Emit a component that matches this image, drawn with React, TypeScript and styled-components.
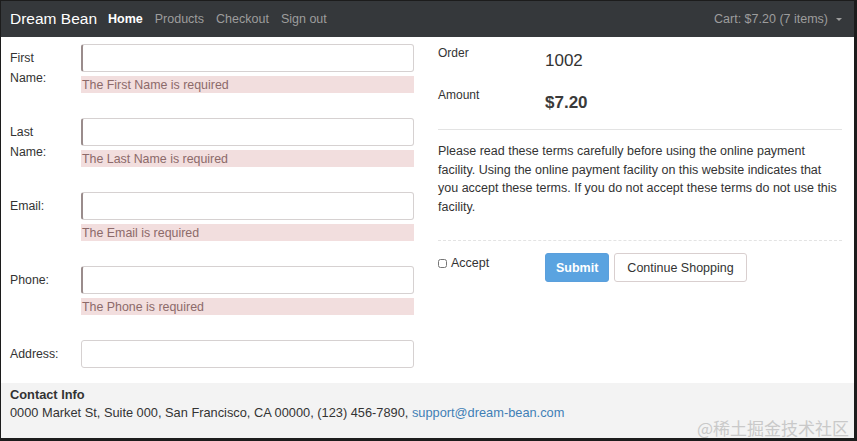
import styled, { createGlobalStyle } from 'styled-components';

const GlobalStyle = createGlobalStyle`
   html, body {
      margin: 0;
      padding: 0;
      background: #ffffff;
   }
   body {
      font-family: 'Liberation Sans', Arial, sans-serif;
      color: #333333;
   }
   * {
      box-sizing: border-box;
   }
`;

const Frame = styled.div`
   width: 857px;
   height: 441px;
   display: flex;
   flex-direction: column;
   border-style: solid;
   border-color: #1c1c1c;
   border-width: 1px 3px 3px 1px;
   overflow: hidden;
`;

const NavBar = styled.nav`
   height: 36px;
   flex-shrink: 0;
   display: flex;
   align-items: center;
   padding: 0 12px 0 9px;
   background: #35383b;
`;

const Brand = styled.div`
   font-size: 15.5px;
   color: #ffffff;
   margin-right: 11px;
`;

const NavLink = styled.a<{ $active?: boolean }>`
   font-size: 12.5px;
   color: ${props => (props.$active ? '#ffffff' : '#9d9d9d')};
   font-weight: ${props => (props.$active ? 700 : 400)};
   margin-right: 12px;
   text-decoration: none;
`;

const Cart = styled.div`
   margin-left: auto;
   display: flex;
   align-items: center;
   gap: 8px;
   font-size: 12.5px;
   color: #9d9d9d;
`;

const Caret = styled.span`
   width: 0;
   height: 0;
   border-left: 3px solid transparent;
   border-right: 3px solid transparent;
   border-top: 3px solid #9d9d9d;
`;

const Main = styled.div`
   flex: 1;
   display: grid;
   grid-template-columns: 404px 404px;
   column-gap: 24px;
   padding: 7px 0 0 9px;
`;

const Form = styled.div`
   display: flex;
   flex-direction: column;
   gap: 25px;
`;

const FieldRow = styled.div`
   display: grid;
   grid-template-columns: 71px 333px;
`;

const Label = styled.label`
   font-size: 12.3px;
   line-height: 20px;
   color: #333333;
   padding-top: 4px;
`;

const Field = styled.div`
   display: flex;
   flex-direction: column;
   gap: 4px;
`;

const Input = styled.input<{ $invalid?: boolean }>`
   height: 28px;
   width: 100%;
   border: 1px solid #d6d1d1;
   border-left-color: ${props => (props.$invalid ? '#9a8c8c' : '#d6d1d1')};
   border-left-width: ${props => (props.$invalid ? 2 : 1)}px;
   border-radius: 3px;
   background: #ffffff;
   outline: none;
`;

const ErrorBox = styled.div`
   height: 17px;
   background: #f2dede;
   color: #8c6a6a;
   font-size: 12.4px;
   line-height: 18px;
   padding-left: 1px;
`;

const Summary = styled.div`
   display: flex;
   flex-direction: column;
`;

const SummaryRow = styled.div<{ $mt: number }>`
   display: grid;
   grid-template-columns: 107px 1fr;
   margin-top: ${props => props.$mt}px;
`;

const SummaryLabel = styled.div`
   font-size: 12px;
   line-height: 16px;
   color: #333333;
`;

const SummaryValue = styled.div<{ $bold?: boolean }>`
   font-size: 17px;
   font-weight: ${props => (props.$bold ? 700 : 400)};
   color: ${props => (props.$bold ? '#3a3a3a' : '#333333')};
   padding-top: 7px;
   line-height: 18px;
`;

const Rule = styled.hr<{ $dashed?: boolean }>`
   width: 100%;
   margin: 0;
   border: 0;
   border-top: 1px ${props => (props.$dashed ? 'dashed' : 'solid')} #e3e3e3;
`;

const Spacer = styled.div<{ $h: number }>`
   height: ${props => props.$h}px;
`;

const Terms = styled.p`
   margin: 12px 0 24px;
   font-size: 12.5px;
   line-height: 18.5px;
   color: #333333;
`;

const Actions = styled.div`
   display: grid;
   grid-template-columns: 107px auto;
   margin-top: 12px;
`;

const AcceptLabel = styled.label`
   display: flex;
   align-items: center;
   gap: 4px;
   font-size: 12.5px;
   color: #333333;
   height: 18px;
   margin-top: 1px;
`;

const Checkbox = styled.input`
   width: 9px;
   height: 9px;
   margin: 0;
`;

const ButtonGroup = styled.div`
   display: flex;
   gap: 5px;
`;

const Button = styled.button<{ $primary?: boolean }>`
   height: 29px;
   padding: 0 ${props => (props.$primary ? 10 : 12)}px;
   font-family: inherit;
   font-size: 12.5px;
   border-radius: 3px;
   border: 1px solid ${props => (props.$primary ? '#5b9fdc' : '#d9cfcf')};
   background: ${props => (props.$primary ? '#5aa3e0' : '#ffffff')};
   color: ${props => (props.$primary ? '#ffffff' : '#333333')};
   font-weight: ${props => (props.$primary ? 700 : 400)};
`;

const Footer = styled.footer`
   height: 55px;
   flex-shrink: 0;
   display: flex;
   flex-direction: column;
   position: relative;
   padding: 3px 9px 0;
   background: #f3f3f3;
   font-size: 12.8px;
   line-height: 18px;
   color: #333333;
`;

const FooterTitle = styled.div`
   font-weight: 700;
`;

const Link = styled.a`
   color: #3f7fb6;
   text-decoration: none;
`;

const Watermark = styled.div`
   position: absolute;
   right: 5px;
   bottom: 1px;
   font-family: 'Noto Sans CJK SC', sans-serif;
   font-size: 17px;
   color: #c9c9c9;
`;

const fields = [
   { label: ['First', 'Name:'], error: 'The First Name is required' },
   { label: ['Last', 'Name:'], error: 'The Last Name is required' },
   { label: ['Email:'], error: 'The Email is required' },
   { label: ['Phone:'], error: 'The Phone is required' },
   { label: ['Address:'], error: '' },
];

const App = () => {
   return (
      <>
         <GlobalStyle />
         <Frame>
            <NavBar>
               <Brand>Dream Bean</Brand>
               <NavLink $active>Home</NavLink>
               <NavLink>Products</NavLink>
               <NavLink>Checkout</NavLink>
               <NavLink>Sign out</NavLink>
               <Cart>
                  Cart: $7.20 (7 items)
                  <Caret />
               </Cart>
            </NavBar>
            <Main>
               <Form>
                  {fields.map(f => (
                     <FieldRow key={f.label.join(' ')}>
                        <Label>
                           {f.label.map(l => (
                              <div key={l}>{l}</div>
                           ))}
                        </Label>
                        <Field>
                           <Input $invalid={!!f.error} />
                           {f.error && <ErrorBox>{f.error}</ErrorBox>}
                        </Field>
                     </FieldRow>
                  ))}
               </Form>
               <Summary>
                  <SummaryRow $mt={1}>
                     <SummaryLabel>Order</SummaryLabel>
                     <SummaryValue>1002</SummaryValue>
                  </SummaryRow>
                  <SummaryRow $mt={17}>
                     <SummaryLabel>Amount</SummaryLabel>
                     <SummaryValue $bold>$7.20</SummaryValue>
                  </SummaryRow>
                  <Spacer $h={17} />
                  <Rule />
                  <Terms>
                     Please read these terms carefully before using the online payment facility. Using the online
                     payment facility on this website indicates that you accept these terms. If you do not accept
                     these terms do not use this facility.
                  </Terms>
                  <Rule $dashed />
                  <Actions>
                     <AcceptLabel>
                        <Checkbox type='checkbox' />
                        Accept
                     </AcceptLabel>
                     <ButtonGroup>
                        <Button $primary>Submit</Button>
                        <Button>Continue Shopping</Button>
                     </ButtonGroup>
                  </Actions>
               </Summary>
            </Main>
            <Footer>
               <FooterTitle>Contact Info</FooterTitle>
               <div>
                  0000 Market St, Suite 000, San Francisco, CA 00000, (123) 456-7890,{' '}
                  <Link>support@dream-bean.com</Link>
               </div>
               <Watermark>@稀土掘金技术社区</Watermark>
            </Footer>
         </Frame>
      </>
   );
};
export default App;
